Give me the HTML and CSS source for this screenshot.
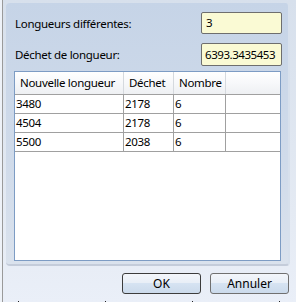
FILE: index.html
```html
<!DOCTYPE html>
<html>
<head>
<meta charset="utf-8">
<link rel="stylesheet" href="styles.css">
</head>
<body>
<div class="frame">
  <div class="panel">
    <div class="field">
      <span class="label">Longueurs différentes:</span>
      <div class="input">3</div>
    </div>
    <div class="field field2">
      <span class="label">Déchet de longueur:</span>
      <div class="input">6393.3435453</div>
    </div>
    <div class="grid">
      <div class="row head">
        <div class="c c1">Nouvelle longueur</div>
        <div class="c c2">Déchet</div>
        <div class="c c3">Nombre</div>
        <div class="c c4"></div>
      </div>
      <div class="row">
        <div class="c c1">3480</div>
        <div class="c c2">2178</div>
        <div class="c c3">6</div>
        <div class="c c4"></div>
      </div>
      <div class="row">
        <div class="c c1">4504</div>
        <div class="c c2">2178</div>
        <div class="c c3">6</div>
        <div class="c c4"></div>
      </div>
      <div class="row">
        <div class="c c1">5500</div>
        <div class="c c2">2038</div>
        <div class="c c3">6</div>
        <div class="c c4"></div>
      </div>
    </div>
  </div>
  <div class="buttons">
    <button class="btn default">OK</button>
    <button class="btn">Annuler</button>
  </div>
  <div class="ticks"><i></i><i></i><i></i><i></i></div>
</div>
</body>
</html>
```
FILE: styles.css
```css
html, body {
  margin: 0;
  padding: 0;
  width: 296px;
  height: 302px;
  overflow: hidden;
  background: #eef2f8;
  font-family: "Noto Sans", "Open Sans", sans-serif;
  font-size: 11.5px;
  letter-spacing: -0.3px;
  color: #000;
}
body {
  padding-left: 2px;
  box-sizing: border-box;
}
.frame {
  border-left: 1px solid #9a9a9a;
  height: 302px;
  box-sizing: border-box;
  padding: 3px 6px 0 3px;
  background: linear-gradient(#d7e0ec, #e4eaf3 70%, #eaeff8);
  display: flex;
  flex-direction: column;
}
.panel {
  height: 263px;
  box-sizing: border-box;
  border-radius: 4px;
  background: linear-gradient(#c6d4e7, #d0dbea 60%, #dae2ed);
  border-right: 2px solid #d7e0ec;
  border-bottom: 2px solid #c4ccda;
  padding: 9px 6px 0 8px;
  display: flex;
  flex-direction: column;
}
.field {
  display: flex;
  align-items: center;
  justify-content: space-between;
}
.field2 {
  margin-top: 9px;
}
.label {
  padding-left: 1px;
}
.input {
  width: 81px;
  height: 22px;
  box-sizing: border-box;
  background: #fafad4;
  border: 1px solid #6e6e6e;
  border-radius: 2px;
  padding: 2px 0 0 4px;
  overflow: hidden;
  white-space: nowrap;
  line-height: 16px;
}
.field2 .input {
  height: 23px;
  padding-top: 3px;
  padding-left: 3px;
  padding-right: 0;
  letter-spacing: -0.45px;
}
.grid {
  margin-top: 5px;
  width: 267px;
  height: 190px;
  box-sizing: border-box;
  border: 1px solid #7d9cc4;
  background: #fff;
}
.row {
  display: flex;
  height: 18px;
  border-bottom: 1px solid #a0a0a0;
  line-height: 17px;
}
.row.head {
  height: 22px;
  line-height: 21px;
  background: linear-gradient(#ffffff, #f7f8fa 50%, #eef0f3);
  border-bottom: 1px solid #a0a0a0;
}
.c {
  box-sizing: border-box;
  border-right: 1px solid #a0a0a0;
  padding-left: 1px;
  white-space: nowrap;
  overflow: hidden;
}
.head .c {
  border-right-color: #d5d9de;
  padding-left: 5px;
}
.c1 { width: 109px; }
.c2 { width: 50px; }
.c3 { width: 52px; }
.c4 { flex: 1; border-right: none; }
.buttons {
  display: flex;
  justify-content: flex-end;
  gap: 9px;
  margin-top: 7px;
  padding-right: 1px;
}
.btn {
  width: 79px;
  height: 21px;
  box-sizing: border-box;
  border: 1px solid #707070;
  border-radius: 3px;
  background: linear-gradient(#f3f6fb, #e9eff7 45%, #d6e3f2 50%, #cbdaeb);
  font-family: inherit;
  font-size: 12px;
  letter-spacing: 0;
  color: #000;
  padding: 0;
  line-height: 18px;
}
.btn.default {
  border-color: #3c3c3c;
}
.ticks {
  display: flex;
  gap: 86px;
  margin-top: auto;
  padding-left: 12px;
}
.ticks i {
  display: block;
  width: 1px;
  height: 1px;
  background: #222;
}
```
